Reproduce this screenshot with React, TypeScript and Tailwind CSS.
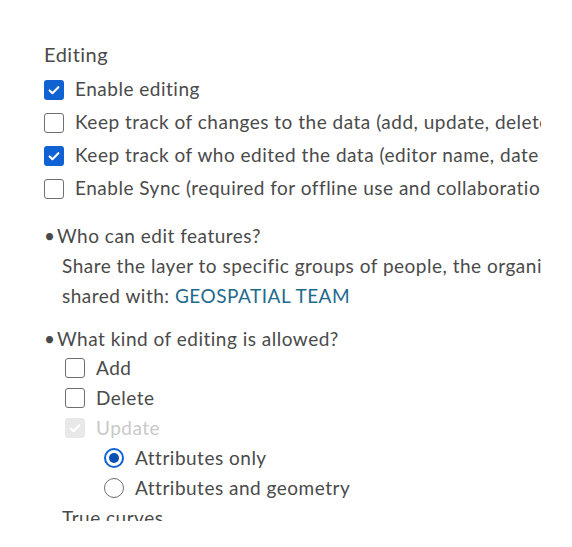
import React from 'react';

const font = { fontFamily: 'Lato, "Noto Sans", sans-serif' };

const Check = ({ checked, disabled }: { checked?: boolean; disabled?: boolean }) => {
  if (disabled) {
    return (
      <span className="w-5 h-5 rounded-[3px] bg-[#e8e8e8] flex items-center justify-center shrink-0">
        <svg width="14" height="14" viewBox="0 0 16 16" fill="none">
          <path d="M3 8.5l3.2 3.2L13 4.8" stroke="#ffffff" strokeWidth="2.4" strokeLinecap="round" strokeLinejoin="round" />
        </svg>
      </span>
    );
  }
  if (checked) {
    return (
      <span className="w-5 h-5 rounded-[3px] bg-[#1061d2] flex items-center justify-center shrink-0">
        <svg width="14" height="14" viewBox="0 0 16 16" fill="none">
          <path d="M3 8.5l3.2 3.2L13 4.8" stroke="#ffffff" strokeWidth="2.4" strokeLinecap="round" strokeLinejoin="round" />
        </svg>
      </span>
    );
  }
  return <span className="w-5 h-5 rounded-[3px] border-[1.5px] border-[#6e6e6e] bg-white shrink-0" />;
};

const Radio = ({ checked }: { checked?: boolean }) =>
  checked ? (
    <span className="w-5 h-5 rounded-full border-2 border-[#1061d2] flex items-center justify-center shrink-0">
      <span className="w-[10px] h-[10px] rounded-full bg-[#0b4fb0]" />
    </span>
  ) : (
    <span className="w-5 h-5 rounded-full border-[1.5px] border-[#6e6e6e] bg-white shrink-0" />
  );

const Row = ({ children, label, h = 'h-[33px]', muted }: { children: React.ReactNode; label: string; h?: string; muted?: boolean }) => (
  <div className={`flex items-center gap-[11px] ${h} whitespace-nowrap`}>
    {children}
    <span className={muted ? 'text-[#c9c9c9]' : ''}>{label}</span>
  </div>
);

export default function App() {
  return (
    <div className="bg-white w-[572px] h-[547px]">
      <div className="w-[541px] h-[521px] overflow-hidden pt-[40px] pl-[44px] text-[19px] tracking-[0.5px] text-[#4a4a4a]" style={font}>
        <div className="text-[20px] leading-[28px] mb-[5px]">Editing</div>
        <Row label="Enable editing"><Check checked /></Row>
        <Row label="Keep track of changes to the data (add, update, delete, and who made them)"><Check /></Row>
        <Row label="Keep track of who edited the data (editor name, date and time)"><Check checked /></Row>
        <Row label="Enable Sync (required for offline use and collaboration)"><Check /></Row>

        <div className="mt-[16px] flex items-center h-[30px] whitespace-nowrap">
          <span className="w-[13px] tracking-normal">•</span>
          <span>Who can edit features?</span>
        </div>
        <div className="pl-[18px] leading-[30px] whitespace-nowrap">
          <div>Share the layer to specific groups of people, the organization, or everyone it is</div>
          <div>
            shared with: <span className="text-[#1f6a8e]">GEOSPATIAL TEAM</span>
          </div>
        </div>

        <div className="mt-[14px] flex items-center h-[28px] whitespace-nowrap">
          <span className="w-[13px] tracking-normal">•</span>
          <span>What kind of editing is allowed?</span>
        </div>
        <div className="pl-[21px]">
          <Row h="h-[30px]" label="Add"><Check /></Row>
          <Row h="h-[30px]" label="Delete"><Check /></Row>
          <Row h="h-[30px]" label="Update" muted><Check disabled /></Row>
          <div className="pl-[39px]">
            <Row h="h-[30px]" label="Attributes only"><Radio checked /></Row>
            <Row h="h-[30px]" label="Attributes and geometry"><Radio /></Row>
          </div>
        </div>
        <div className="pl-[18px] leading-[30px] whitespace-nowrap">True curves</div>
      </div>
    </div>
  );
}
